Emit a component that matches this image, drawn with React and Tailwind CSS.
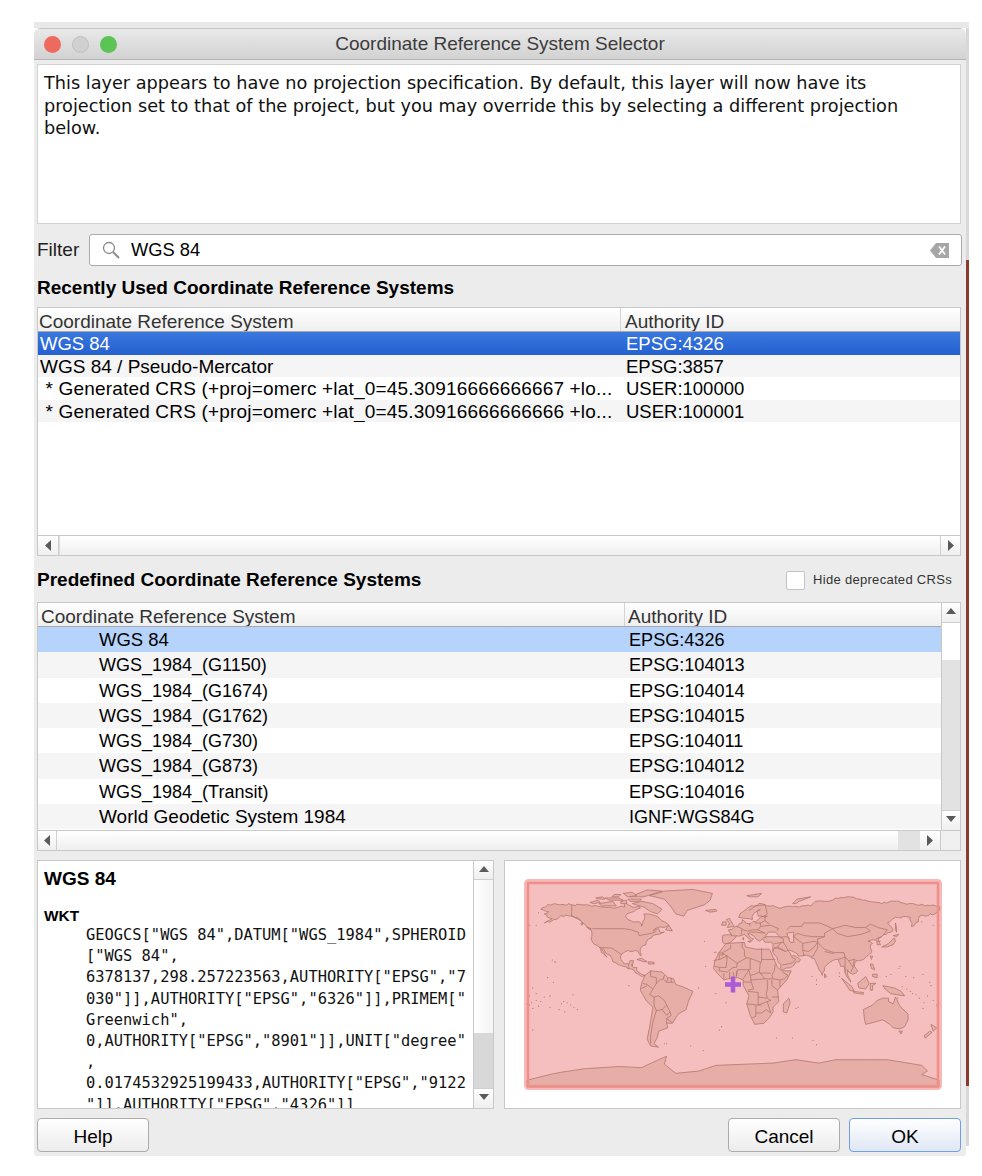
import React from "react";

// Land outlines in lon/lat, plate carree
const LAND = [
  // North and Central America
  [[-168,66],[-164,68],[-162,70],[-156,71],[-141,70],[-128,70],[-115,68],[-108,68],[-100,68],[-95,68],[-94,72],[-88,68],[-82,69],[-81,67],[-87,64],[-94,60],[-92,57],[-85,55],[-82,55],[-80,51],[-79,55],[-77,60],[-78,62],[-70,61],[-65,59],[-60,55],[-56,52],[-60,50],[-66,50],[-70,47],[-65,49],[-64,46],[-60,46],[-66,44],[-70,43],[-71,41],[-74,40],[-76,37],[-76,35],[-81,31],[-80,26],[-81,25],[-83,29],[-85,30],[-90,29],[-94,29],[-97,27],[-98,22],[-95,18],[-91,18],[-90,21],[-87,21],[-88,16],[-84,15],[-83,11],[-80,9],[-77,8],[-80,7],[-85,10],[-87,13],[-92,14],[-96,16],[-105,20],[-106,23],[-112,29],[-113,31],[-115,31],[-110,24],[-115,28],[-117,33],[-121,35],[-124,40],[-124,48],[-128,51],[-133,56],[-138,59],[-146,61],[-152,59],[-158,56],[-165,54],[-158,58],[-162,59],[-165,62],[-161,64]],
  // Greenland
  [[-73,78],[-60,82],[-35,83.5],[-18,80],[-20,74],[-25,70],[-40,65],[-43,60],[-50,62],[-54,68],[-60,75]],
  // Arctic islands
  [[-80,73],[-70,71],[-62,66],[-66,62],[-72,64],[-78,68],[-88,71]],
  [[-117,71],[-105,73],[-102,69],[-115,69]],
  [[-90,77],[-75,83],[-62,82],[-78,77]],
  [[-125,72],[-118,74],[-116,72],[-122,71]],
  [[-112,76],[-100,76],[-96,74],[-108,74]],
  [[-96,80],[-88,81],[-84,78],[-92,77]],
  [[-92,75],[-80,75],[-82,73],[-90,73]],
  [[-104,79],[-98,79],[-100,77],[-106,77]],
  [[-120,76],[-114,77],[-112,75],[-118,75]],
  [[-98,73],[-93,74],[-93,71],[-98,71]],
  [[-59,48],[-56,52],[-53,47]],
  [[-84,22],[-80,23],[-75,20],[-78,20]],
  [[-74,20],[-69,19.5],[-69,18],[-74,18]],
  [[-133,54],[-131,54],[-132,52]],
  [[-128,50.5],[-124,49],[-125,48.5]],
  // South America
  [[-77,8],[-72,12],[-62,11],[-57,6],[-52,5],[-50,0],[-44,-2],[-35,-6],[-39,-15],[-41,-22],[-48,-26],[-53,-34],[-58,-34],[-57,-38],[-65,-41],[-66,-46],[-69,-52],[-65,-55],[-72,-54],[-75,-48],[-73,-38],[-70,-20],[-76,-14],[-81,-5],[-80,1]],
  // Africa
  [[-6,36],[10,37],[11,33],[20,31],[32,31],[35,24],[39,15],[43,12],[51,12],[47,4],[39,-5],[40,-15],[35,-20],[35,-24],[32,-29],[27,-34],[19,-35],[15,-27],[12,-17],[14,-10],[9,-1],[9,4],[4,6],[-4,5],[-8,4],[-13,9],[-17,14],[-16,20],[-13,27],[-10,31]],
  [[49,-12],[50,-16],[47,-25],[44,-24],[44,-17]],
  // Eurasia
  [[-9,37],[-9,43],[-1,44],[-4,48],[2,51],[8,54],[8,57],[11,54],[20,55],[24,59],[30,60],[22,60],[21,64],[24,66],[18,62],[17,57],[11,58],[5,59],[6,62],[14,68],[25,71],[40,67],[44,68],[60,69],[68,69],[72,73],[80,73],[100,77],[113,74],[130,71],[140,73],[160,70],[180,69],[180,65],[177,62],[163,60],[162,55],[156,51],[155,59],[142,59],[135,54],[140,48],[130,42],[127,39],[129,35],[126,35],[125,39],[121,39],[118,38],[122,36],[120,32],[121,28],[114,22],[108,21],[106,18],[109,12],[105,9],[100,13],[103,2],[100,6],[98,10],[97,16],[94,16],[92,22],[87,21],[80,15],[78,8],[73,18],[72,21],[67,25],[57,25],[56,27],[50,30],[48,30],[51,25],[56,24],[59,22],[52,16],[43,13],[39,21],[35,28],[35,36],[28,37],[26,40],[23,38],[20,40],[13,45],[18,40],[16,38],[10,44],[3,43],[0,39],[-5,36]],
  // Europe and Asia islands
  [[-5,50],[1,51],[-2,56],[-3,58],[-6,57],[-3,54]],
  [[-10,52],[-6,52],[-6,55],[-9,55]],
  [[-24,65],[-15,66],[-14,64.5],[-20,63.5]],
  [[12,78],[25,80],[22,77],[15,77]],
  [[52,71],[56,75],[68,77],[58,73],[55,71]],
  [[9,39],[9.5,41],[8.5,41]],
  [[13,38],[15.5,38],[15,37]],
  [[142,54],[143,50],[143,46],[142,48]],
  [[130,33],[136,36],[141,41],[142,38],[140,35],[135,33]],
  [[140,43],[145,44],[143,42]],
  [[120,25],[122,25],[121,22]],
  [[80,9.5],[82,7],[80,6]],
  [[120,18],[122,18],[124,13],[121,14]],
  [[122,9],[126,9],[126,6],[122,7]],
  [[95,5.5],[104,-2],[106,-6],[102,-5]],
  [[105,-6],[114,-7],[114,-8.5],[106,-7.5]],
  [[109,1],[116,7],[119,1],[116,-4],[110,-3]],
  [[120,1],[125,1],[122,-1],[122,-5],[120,-5]],
  [[131,-1],[141,-3],[147,-6],[150,-10],[143,-9],[138,-8],[133,-4]],
  // Australia and New Zealand
  [[114,-22],[122,-18],[126,-14],[131,-12],[136,-12],[136,-15],[140,-17],[142,-11],[146,-19],[153,-26],[153,-31],[150,-37],[146,-39],[140,-38],[137,-35],[131,-31],[124,-33],[116,-35],[115,-31]],
  [[145,-41],[148,-41],[147,-43.5]],
  [[173,-35],[178,-38],[175,-41]],
  [[172,-41],[174,-42],[168,-47],[167,-45]],
  // Antarctica
  [[-180,-84],[-160,-79],[-150,-77],[-130,-74],[-100,-72],[-80,-73],[-65,-66],[-58,-63],[-60,-70],[-50,-78],[-30,-76],[-15,-71],[10,-70],[35,-69],[55,-66],[75,-69],[90,-66],[115,-66],[135,-66],[165,-71],[170,-76],[165,-79],[180,-84],[180,-90],[-180,-90]],
];

const SEAS = [
  [[28,42],[31,46],[37,46],[41,42],[35,42]],
  [[47,45],[53,46],[53,37],[50,37]],
];

const BORDERS = [
  [[-123,49],[-95,49],[-89,48],[-83,46],[-82,43],[-76,44],[-71,45],[-67,47]],
  [[-141,70],[-141,60],[-133,56]],
  [[-117,32.5],[-106,32],[-97,26]],
  [[-92,14],[-91,18]],[[-88,16],[-89,18]],
  [[-72,12],[-72,7],[-67,6],[-67,1]],[[-67,1],[-70,-4],[-75,0],[-79,1]],
  [[-60,8],[-61,5],[-64,4],[-67,1]],[[-57,6],[-58,2]],[[-54,6],[-54,2]],[[-61,5],[-58,2],[-52,2]],
  [[-80,-3.5],[-75,-1]],[[-70,-4],[-73,-9],[-69,-11]],
  [[-69,-11],[-65,-10],[-60,-14],[-58,-18],[-62,-22],[-67,-23],[-69,-18],[-69,-11]],
  [[-67,-23],[-70,-33],[-72,-45],[-72,-52]],[[-58,-18],[-55,-24],[-58,-27],[-62,-22]],
  [[-55,-24],[-54,-27],[-58,-30],[-58,-34]],[[-58,-30],[-53,-33.5]],
  [[-2,35],[-2,32],[-9,28]],[[-13,27.7],[-8.7,27.7],[-8.7,26],[-12,26],[-12,22],[-17,21]],
  [[-12,22],[-5,25],[-8.7,27]],[[-5,25],[-6,15],[-12,15],[-16,16]],
  [[-5,25],[3,19],[4,19],[12,23.5]],[[8,37],[8,33],[10,30],[10,25],[12,23.5]],
  [[25,32],[25,20]],[[12,23.5],[15,23],[24,19.5],[25,20]],[[25,22],[37,22]],
  [[4,19],[3,15],[0,15],[-5,11],[-12,12],[-12,15]],[[15,23],[15,13],[14,13],[4,13],[3,7]],
  [[24,19.5],[23,11],[19,9],[15,8],[14,12]],[[14,13],[9,5]],[[9,2.3],[16,2],[15,8]],
  [[15,4],[23,4.5],[28,5],[23,11]],[[37,18],[36,12],[34,8],[35,5],[28,5]],[[23,10],[33,10]],
  [[43,11],[48,8],[45,5],[41,4],[35,5]],[[41,4],[41,-2]],[[34,4],[34,-1],[39,-5]],
  [[30,4],[30,-5],[29,-8],[30,-12],[22,-11],[22,-7],[13,-6]],[[16,2],[18,-4],[13,-5]],
  [[12,-17],[22,-18],[25,-18]],[[22,-11],[22,-18]],[[20,-18],[20,-28],[17,-29]],
  [[20,-25],[25,-25],[29,-22],[33,-25]],[[22,-18],[30,-15],[33,-14],[30,-12]],
  [[34,-11],[40,-11]],[[30,-15],[33,-25]],[[-8,5],[-8,10]],[[-3,5],[-3,11]],[[1,6],[0,11]],[[3,7],[3,12]],
  [[-2,43],[3,42.5]],[[3,51],[8,49],[7,44]],[[14,54],[15,51]],[[8,48],[13,47],[17,48],[22,48],[28,45],[20,46],[14,46]],
  [[19,54],[24,54],[24,51],[22,48]],[[28,60],[28,56],[24,54]],[[24,51],[33,52],[40,49],[38,47]],[[28,56],[32,53]],
  [[36,36],[44,37],[44,40],[41,41.5]],[[26,41],[29,41]],[[44,37],[46,34],[48,30]],[[61,36],[61,30],[62,25]],
  [[39,33],[46,29],[48,30]],[[42,37],[39,33],[36,32],[35,29]],[[36,32],[39,32],[46,29]],[[52,19],[55,22],[51,24]],[[43,17],[52,19]],
  [[28,70],[30,62],[27,60]],[[14,65],[20,69],[28,70]],[[41,41.5],[47,42],[50,40]],
  [[47,48],[50,51],[60,51],[62,54],[76,54],[83,51],[87,49]],[[53,42],[56,45],[62,43],[70,42],[80,42],[80,45],[87,49]],
  [[87,49],[98,52],[107,50],[116,50],[120,47],[112,44],[100,42],[91,45],[87,49]],
  [[116,50],[120,53],[127,50],[135,48],[131,43]],[[74,37],[80,31],[88,28],[97,28],[98,24],[101,21],[106,22],[108,21]],
  [[74,37],[74,40],[80,42]],[[74,37],[74,32],[70,25],[68,24]],[[61,36],[66,37],[71,38],[74,37]],
  [[61,30],[66,29],[71,33],[74,37]],[[53,42],[61,36]],[[92,22],[98,24]],[[98,24],[98,10]],[[101,21],[105,15],[103,11]],
  [[106,22],[105,15]],[[80,29],[88,27]],[[125,40],[130,42]],[[126,38],[129,38]],
];

// Scattered small islands
const DOTS = [
  [-156,20],[-158,21.5],[-155,19.5],[-150,-17],[-145,-16],[-148,-15],[-140,-9],[-172,-14],[-175,-21],[-178,-18],[178,-18],[167,-16],[166,-21],[160,-9],[157,-8],[155,-6],[152,-4],[148,-2],
  [134,7],[145,14],[146,16],[166,9],[172,2],[173,-1],[-170,-19],[-176,-16],[-165,-11],[-160,-20],[-91,-1],[-60,-52],[-58,-52],[-37,-54],[-26,-58],[-25,38],[-16,28],[-24,16],[-15,28.5],
  [57,-20],[55,-21],[70,-49],[73,-53],[-172,52],[-178,52],[175,52],[165,55],[-170,63],[-175,-40],[-180,-17],[180,-17],[180,65],[180,52],
  [-142,-18],[-139,-20],[-136,-22],[-152,-22],[-147,-24],[-160,-10],[-157,2],[-162,6],[-175,-3],[-172,-8],[-168,-15],[-178,-10],[170,-10],[175,-14],[163,-12],[158,6],[151,7],[144,-12],[138,9],[-30,-3],[-15,-8],[-6,-16],[-10,-37],[-12,-40],[38,-47],[52,-47],[69,7],[73,4],[73,0],[93,10],[93,7],
];

// Deterministic wobble so the coasts do not look like straight ruled lines
const wobble = (i) => {
  const s = Math.sin(i * 12.9898) * 43758.5453;
  return (s - Math.floor(s) - 0.5) * 2;
};

const roughen = (pts) => {
  const out = [];
  pts.forEach((p, i) => {
    const q = pts[(i + 1) % pts.length];
    const len = Math.hypot(q[0] - p[0], q[1] - p[1]);
    const steps = Math.min(8, Math.max(1, Math.round(len / 2.5)));
    for (let k = 0; k < steps; k++) {
      const t = k / steps;
      const j = k === 0 ? 0 : 0.9;
      out.push([
        p[0] + (q[0] - p[0]) * t + j * wobble(i * 31 + k * 7 + 1),
        p[1] + (q[1] - p[1]) * t + j * wobble(i * 17 + k * 11 + 3),
      ]);
    }
  });
  return out;
};

const toPath = (pts, close) =>
  "M" + pts.map(([x, y]) => `${x.toFixed(2)} ${(-y).toFixed(2)}`).join("L") + (close ? "Z" : "");

const WorldMap = () => (
  <svg width="418" height="211" viewBox="0 0 418 211">
    <rect x="1.5" y="1.5" width="415" height="208" rx="3" fill="#f4bfbe" stroke="#f6b9b7" strokeWidth="3" />
    <g transform="translate(209 105.5) scale(1.144 1.139)">
      {LAND.map((pts, i) => (
        <path key={i} d={toPath(pts.length > 30 ? roughen(pts) : pts, true)} fill="#e6aea6" stroke="#ad6e65" strokeWidth="0.62" strokeLinejoin="round" />
      ))}
      {SEAS.map((pts, i) => (
        <path key={i} d={toPath(pts, true)} fill="#f4bfbe" stroke="#ad6e65" strokeWidth="0.62" />
      ))}
      {BORDERS.map((pts, i) => (
        <path key={i} d={toPath(pts, false)} fill="none" stroke="#ad6e65" strokeWidth="0.6" strokeLinejoin="round" />
      ))}
      {DOTS.map(([x, y], i) => (
        <circle key={i} cx={x} cy={-y} r="0.5" fill="#ad6e65" />
      ))}
    </g>
    <rect x="4" y="4" width="410" height="203" fill="none" stroke="#ee8f8a" strokeWidth="2.5" />
    <path d="M209 97.5v16M201 105.500h16" stroke="#ab5bd6" strokeWidth="4.500" fill="none" />
  </svg>
);

const Arrow = ({ dir }) => {
  const d = {
    up: "M0 7L5 1L10 7Z",
    down: "M0 1L10 1L5 7Z",
    left: "M8 0V11L2 5.500Z",
    right: "M2 0V11L8 5.500Z",
  }[dir];
  return (
    <svg width="10" height="11" viewBox="0 0 10 11">
      <path d={d} fill="#5a5a5a" />
    </svg>
  );
};

const ScrollButton = ({ dir, className = "" }) => (
  <div className={`flex items-center justify-center shrink-0 bg-gradient-to-b from-white to-[#efefef] ${className}`}>
    <Arrow dir={dir} />
  </div>
);

const recentRows = [
  ["WGS 84", "EPSG:4326", "text-[18.500px]"],
  ["WGS 84 / Pseudo-Mercator", "EPSG:3857", "text-[19px]"],
  [" * Generated CRS (+proj=omerc +lat_0=45.30916666666667 +lo...", "USER:100000", "text-[19px] tracking-[0.18px]"],
  [" * Generated CRS (+proj=omerc +lat_0=45.30916666666666 +lo...", "USER:100001", "text-[19px] tracking-[0.18px]"],
];

const predefinedRows = [
  ["WGS 84", "EPSG:4326", "text-[18.500px]"],
  ["WGS_1984_(G1150)", "EPSG:104013", "text-[18px]"],
  ["WGS_1984_(G1674)", "EPSG:104014", "text-[18px]"],
  ["WGS_1984_(G1762)", "EPSG:104015", "text-[18px]"],
  ["WGS_1984_(G730)", "EPSG:104011", "text-[18px]"],
  ["WGS_1984_(G873)", "EPSG:104012", "text-[18px]"],
  ["WGS_1984_(Transit)", "EPSG:104016", "text-[18px]"],
  ["World Geodetic System 1984", "IGNF:WGS84G", "text-[19px]"],
];

const wktLines = [
  'GEOGCS["WGS 84",DATUM["WGS_1984",SPHEROID',
  '["WGS 84",',
  '6378137,298.257223563,AUTHORITY["EPSG","7',
  '030"]],AUTHORITY["EPSG","6326"]],PRIMEM["',
  'Greenwich",',
  '0,AUTHORITY["EPSG","8901"]],UNIT["degree"',
  ",",
  '0.0174532925199433,AUTHORITY["EPSG","9122',
  '"]],AUTHORITY["EPSG","4326"]]',
];

const Button = ({ children, primary }) => (
  <button
    className={`w-[112px] h-[34px] rounded-[4px] border text-[19px] leading-[35px] text-black ${
      primary
        ? "border-[#6f9fe6] bg-gradient-to-b from-white to-[#dfe7f5]"
        : "border-[#acacac] bg-gradient-to-b from-white to-[#ececec]"
    }`}
  >
    {children}
  </button>
);

const App = () => {
  return (
    <div className="w-[982px] h-[1176px] bg-white pt-[22px] pl-[34px] font-['Liberation_Sans',sans-serif] overflow-hidden">
      <div className="w-[935px] h-[6px] bg-[#e8e8e8]"></div>
      <div className="flex w-[935px]">
        <div className="w-[932px] h-[1128px] flex flex-col bg-[#ececec] rounded-t-[7px] rounded-b-[2px] overflow-hidden">
          {/* Title bar */}
          <div className="h-[32px] shrink-0 relative flex items-center justify-center bg-gradient-to-b from-[#e9e9e9] to-[#d2d2d2] border-b border-[#b4b4b4] border-t border-t-[#c4c4c4]">
            <div className="absolute left-[10px] top-[7px] flex gap-[11px]">
              <div className="w-[17px] h-[17px] rounded-full bg-[#ee6a5f]"></div>
              <div className="w-[17px] h-[17px] rounded-full bg-[#d0d0d0] border border-[#c0c0c0]"></div>
              <div className="w-[17px] h-[17px] rounded-full bg-[#5cc454]"></div>
            </div>
            <span className="text-[19px] leading-[32px] text-[#3c3c3c]">Coordinate Reference System Selector</span>
          </div>

          <div className="flex-1 flex flex-col pl-[3px] pr-[5px] pt-[4px] text-black">
            {/* Message */}
            <div className="h-[160px] shrink-0 bg-white border border-[#d2d2d2] px-[6px] pt-[7px] font-['DejaVu_Sans',sans-serif] text-[17.700px] leading-[22.500px] text-[#111] whitespace-nowrap overflow-hidden">
              This layer appears to have no projection specification. By default, this layer will now have its
              <br />
              projection set to that of the project, but you may override this by selecting a different projection
              <br />
              below.
            </div>

            {/* Filter */}
            <div className="mt-[10px] h-[32px] shrink-0 flex items-center gap-[10px]">
              <span className="text-[19px] w-[42px] text-[#222] leading-[34px]">Filter</span>
              <div className="flex-1 h-[32px] -mr-px bg-white border border-[#aaaaaa] rounded-[3px] flex items-center pl-[12px] pr-[12px]">
                <svg width="18" height="18" viewBox="0 0 18 18" fill="none" stroke="#8a8a8a">
                  <circle cx="7" cy="7" r="5.500" strokeWidth="1.300" />
                  <path d="M11 11l6 6" strokeWidth="2" />
                </svg>
                <span className="ml-[11px] text-[18.300px] flex-1">WGS 84</span>
                <svg width="19" height="15" viewBox="0 0 19 15">
                  <path d="M6 0H19V15H6L0 7.500Z" fill="#a6a6a6" />
                  <path d="M9 3.500l6 8M15 3.500l-6 8" stroke="#fff" strokeWidth="1.800" />
                </svg>
              </div>
            </div>

            {/* Recent */}
            <div className="mt-[11px] h-[22px] shrink-0 flex items-center text-[19px] font-bold">
              Recently Used Coordinate Reference Systems
            </div>
            <div className="mt-[8px] h-[249px] shrink-0 flex flex-col border border-[#c8c8c8] bg-white overflow-hidden">
              <div className="h-[24px] shrink-0 flex bg-gradient-to-b from-white to-[#efefef] border-b border-[#a8a8a8] text-[19px] text-[#333] leading-[27px]">
                <div className="w-[583px] pl-[1px] border-r border-[#d4d4d4] overflow-hidden">Coordinate Reference System</div>
                <div className="flex-1 pl-[4px] overflow-hidden">Authority ID</div>
              </div>
              <div className="flex-1">
                {recentRows.map((row, i) => (
                  <div
                    key={i}
                    className={`h-[22.500px] flex leading-[23px] whitespace-pre ${
                      i === 0
                        ? "bg-gradient-to-b from-[#3a78de] to-[#2560d0] text-white"
                        : i % 2 === 1
                          ? "bg-[#f5f5f5]"
                          : "bg-white"
                    }`}
                  >
                    <div className={`w-[583px] pl-[2px] overflow-hidden ${row[2]}`}>{row[0]}</div>
                    <div className="flex-1 pl-[5px] text-[18.500px]">{row[1]}</div>
                  </div>
                ))}
              </div>
              <div className="h-[20px] shrink-0 flex border-t border-[#c8c8c8]">
                <ScrollButton dir="left" className="w-[21px] border-r border-[#cfcfcf]" />
                <div className="flex-1 bg-gradient-to-b from-white to-[#efefef] border-l border-[#dcdcdc]"></div>
                <ScrollButton dir="right" className="w-[20px] border-l border-[#cfcfcf]" />
              </div>
            </div>

            {/* Predefined */}
            <div className="mt-[13px] h-[22px] shrink-0 flex items-center text-[19px] font-bold">
              <span className="flex-1">Predefined Coordinate Reference Systems</span>
              <div className="w-[19px] h-[19px] bg-white border border-[#c2c2c2] rounded-[2px] mr-[8px]"></div>
              <span className="text-[13px] font-normal text-[#333] tracking-[0.3px] mr-[9px]">Hide deprecated CRSs</span>
            </div>
            <div className="mt-[11px] h-[249px] shrink-0 flex flex-col border border-[#c8c8c8] bg-white overflow-hidden">
              <div className="h-[227px] shrink-0 flex">
                <div className="flex-1 min-w-0 overflow-hidden">
                  <div className="h-[24px] flex bg-gradient-to-b from-white to-[#efefef] border-b border-[#a8a8a8] text-[19px] text-[#333] leading-[27px]">
                    <div className="w-[587px] pl-[3px] border-r border-[#d4d4d4] overflow-hidden">Coordinate Reference System</div>
                    <div className="flex-1 pl-[3px] overflow-hidden">Authority ID</div>
                  </div>
                  {predefinedRows.map((row, i) => (
                    <div
                      key={i}
                      className={`h-[25.300px] flex leading-[26px] ${
                        i === 0 ? "bg-[#b5d3fb]" : i % 2 === 1 ? "bg-[#f5f5f5]" : "bg-white"
                      }`}
                    >
                      <div className={`w-[587px] pl-[61px] ${row[2]}`}>{row[0]}</div>
                      <div className="flex-1 pl-[4px] text-[18.100px]">{row[1]}</div>
                    </div>
                  ))}
                </div>
                <div className="w-[19px] shrink-0 flex flex-col border-l border-[#c8c8c8]">
                  <ScrollButton dir="up" className="h-[20px] border-b border-[#cfcfcf]" />
                  <div className="h-[37px] bg-white"></div>
                  <div className="flex-1 bg-[#e2e2e2]"></div>
                  <ScrollButton dir="down" className="h-[20px] border-t border-[#cfcfcf]" />
                </div>
              </div>
              <div className="flex-1 flex border-t border-[#c8c8c8]">
                <ScrollButton dir="left" className="w-[19px] border-r border-[#cfcfcf]" />
                <div className="flex-1 bg-gradient-to-b from-white to-[#efefef]"></div>
                <div className="w-[22px] bg-[#e2e2e2]"></div>
                <ScrollButton dir="right" className="w-[20px]" />
                <div className="w-[20px] bg-[#f0f0f0] border-l border-[#c8c8c8]"></div>
              </div>
            </div>

            {/* Details and map */}
            <div className="mt-[9px] h-[249px] shrink-0 flex gap-[10px]">
              <div className="w-[457px] flex border border-[#c8c8c8] bg-white overflow-hidden">
                <div className="flex-1 min-w-0 pl-[6px] pt-[6px] overflow-hidden">
                  <div className="text-[19px] font-bold leading-[24px]">WGS 84</div>
                  <div className="mt-[15px] text-[15.400px] font-bold leading-[20px]">WKT</div>
                  <div className="mt-[-1px] pl-[42px] font-['DejaVu_Sans_Mono',monospace] text-[15.400px] leading-[21.200px] text-[#111] whitespace-pre">
                    {wktLines.map((line, i) => (
                      <div key={i}>{line}</div>
                    ))}
                  </div>
                </div>
                <div className="w-[20px] shrink-0 flex flex-col border-l border-[#c8c8c8]">
                  <ScrollButton dir="up" className="h-[19px] border-b border-[#cfcfcf]" />
                  <div className="flex-1 bg-gradient-to-r from-white to-[#f4f4f4]"></div>
                  <div className="h-[55px] bg-[#d8d8d8]"></div>
                  <ScrollButton dir="down" className="h-[20px] border-t border-[#cfcfcf]" />
                </div>
              </div>
              <div className="flex-1 flex items-center justify-center border border-[#c8c8c8] bg-white">
                <WorldMap />
              </div>
            </div>

            {/* Buttons */}
            <div className="mt-[9px] flex items-center">
              <Button>Help</Button>
              <div className="flex-1"></div>
              <Button>Cancel</Button>
              <div className="w-[9px]"></div>
              <Button primary>OK</Button>
            </div>
          </div>
        </div>

        {/* Edge of the window behind */}
        <div className="w-[3px] h-[1128px] flex flex-col">
          <div className="h-[232px] bg-[#d8d8d8]"></div>
          <div className="h-[826px] bg-[#8a3b2e]"></div>
          <div className="flex-1 bg-[#d8d8d8] mb-[10px]"></div>
        </div>
      </div>
    </div>
  );
};

export default App;
